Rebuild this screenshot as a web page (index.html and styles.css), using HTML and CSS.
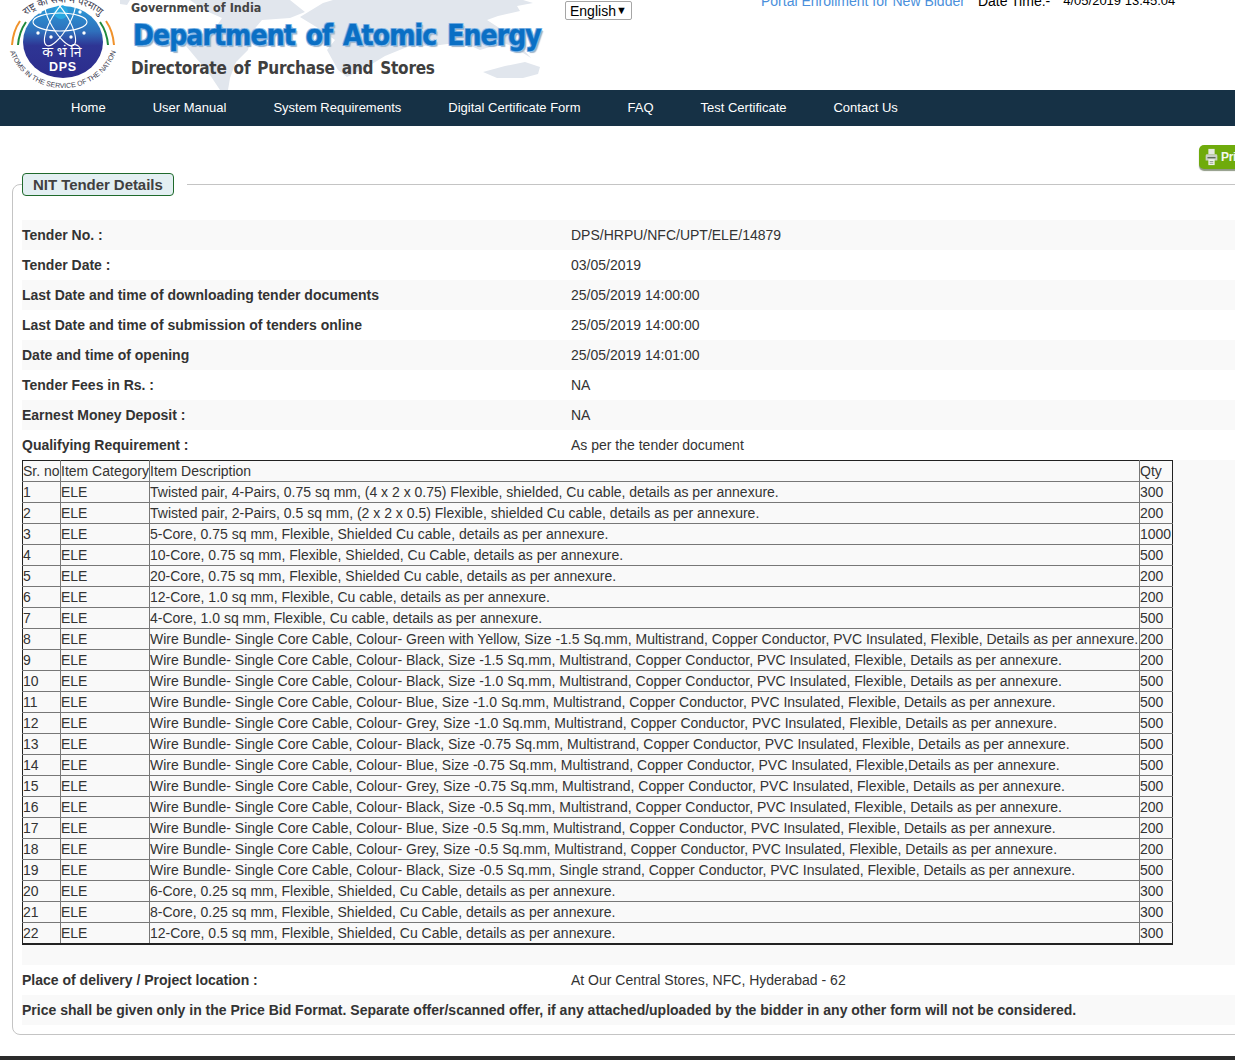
FILE: index.html
```html
<!DOCTYPE html>
<html lang="en">
<head>
<meta charset="utf-8">
<title>NIT Tender Details</title>
<link rel="stylesheet" href="styles.css">
</head>
<body>
<header class="top">
  <svg class="map" viewBox="0 0 560 90" aria-hidden="true">
    <path d="M120 0h10l-3 5-7-1z"/>
    <path d="M190 0H290L305 12 290 18 262 20 252 32 248 50 236 62 230 78 228 90H220L208 72 196 58 186 46 196 36 214 30 222 18 204 10Z"/>
    <path d="M333 0H523L533 3 517 6 520 11 498 16 487 20 507 33 520 46 531 58 512 46 503 43 480 50 462 42 440 45 407 47 385 56 367 67 347 77 338 70 327 50 335 40 318 28 300 17 323 3Z"/>
    <path d="M483 72L505 66 525 62 540 67 538 74 523 78 497 78Z"/>
  </svg>
  <svg class="logo" viewBox="0 0 130 90" role="img" aria-label="DPS logo">
    <defs>
      <linearGradient id="disc" x1="0" y1="0" x2="0" y2="1">
        <stop offset="0" stop-color="#2a9ad8"/>
        <stop offset=".35" stop-color="#2f70bc"/>
        <stop offset=".55" stop-color="#2e3594"/>
        <stop offset="1" stop-color="#2c2c8c"/>
      </linearGradient>
      <path id="ringBottom" d="M8 38A55 50 0 0 0 118 38"/>
      <path id="ringTop" d="M19 24A48 36 0 0 1 107 24"/>
    </defs>
    <ellipse cx="63" cy="42" rx="40" ry="36" fill="url(#disc)"/>
    <circle cx="61" cy="12" r="7" fill="#29a8e0"/>
    <g fill="none" stroke="#fff" stroke-width="1.100">
      <ellipse cx="60" cy="22" rx="27" ry="9"/>
      <ellipse cx="60" cy="22" rx="27" ry="9" transform="rotate(60 60 22)"/>
      <ellipse cx="60" cy="22" rx="27" ry="9" transform="rotate(120 60 22)"/>
    </g>
    <g fill="#fff">
      <circle cx="38" cy="33" r="1.700"/><circle cx="84" cy="33" r="1.700"/>
      <circle cx="51" cy="37" r="1.700"/><circle cx="71" cy="37" r="1.700"/>
      <circle cx="40" cy="12" r="1.700"/><circle cx="80" cy="12" r="1.700"/>
    </g>
    <text class="logo-hi" x="62" y="57" text-anchor="middle">क भं नि</text>
    <text class="logo-dps" x="63" y="71" text-anchor="middle">DPS</text>
    <path d="M20 21q-7 10-8 24" fill="none" stroke="#f0922b" stroke-width="2"/>
    <path d="M23 22q-7 10-8 23" fill="none" stroke="#fff" stroke-width="1"/>
    <path d="M26 22q-7 10-8 23" fill="none" stroke="#1e8a3c" stroke-width="2"/>
    <path d="M106 21q7 10 8 24" fill="none" stroke="#f0922b" stroke-width="2"/>
    <path d="M103 22q7 10 8 23" fill="none" stroke="#fff" stroke-width="1"/>
    <path d="M100 22q7 10 8 23" fill="none" stroke="#1e8a3c" stroke-width="2"/>
    <text class="logo-ring"><textPath href="#ringBottom" startOffset="50%" text-anchor="middle">ATOMS IN THE SERVICE OF THE NATION</textPath></text>
    <text class="logo-ring-hi"><textPath href="#ringTop" startOffset="50%" text-anchor="middle">राष्ट्र की सेवा में परमाणु</textPath></text>
  </svg>
  <div class="titles">
    <div class="gov">Government of India</div>
    <div class="dae">Department of Atomic Energy</div>
    <div class="dir">Directorate of Purchase and Stores</div>
  </div>
  <div class="lang"><span>English</span></div>
  <div class="meta">
    <a class="enrol" href="#">Portal Enrollment for New Bidder</a>
    <span>Date Time:-</span>
    <span class="stamp">4/05/2019 13:45:04</span>
  </div>
</header>
<nav class="nav">
  <a href="#">Home</a>
  <a href="#">User Manual</a>
  <a href="#">System Requirements</a>
  <a href="#">Digital Certificate Form</a>
  <a href="#">FAQ</a>
  <a href="#">Test Certificate</a>
  <a href="#">Contact Us</a>
</nav>
<main class="main">
  <div class="tools">
    <a class="print" href="#">
      <svg class="print-icon" viewBox="0 0 14 20" aria-hidden="true">
        <path fill="#e4e8e0" d="M3.500 1h7v6h-7z"/>
        <path fill="#c9cfc6" d="M2 7h10a1.500 1.500 0 0 1 1.500 1.500V14H.5V8.500A1.500 1.500 0 0 1 2 7z"/>
        <path fill="#5d6a5a" d="M2.500 10h9v1.500h-9z"/>
        <path fill="#eef1ea" d="M3.500 12.500h7V19h-7z"/>
        <path fill="#9aa596" d="M5 14.500h4v1H5zM5 16.500h4v1H5z"/>
      </svg>
      <span>Print</span>
    </a>
  </div>
  <fieldset class="panel">
    <legend class="panel-legend"><span>NIT Tender Details</span></legend>
    <div class="row"><b>Tender No. :</b><span>DPS/HRPU/NFC/UPT/ELE/14879</span></div>
    <div class="row"><b>Tender Date :</b><span>03/05/2019</span></div>
    <div class="row"><b>Last Date and time of downloading tender documents</b><span>25/05/2019 14:00:00</span></div>
    <div class="row"><b>Last Date and time of submission of tenders online</b><span>25/05/2019 14:00:00</span></div>
    <div class="row"><b>Date and time of opening</b><span>25/05/2019 14:01:00</span></div>
    <div class="row"><b>Tender Fees in Rs. :</b><span>NA</span></div>
    <div class="row"><b>Earnest Money Deposit :</b><span>NA</span></div>
    <div class="row"><b>Qualifying Requirement :</b><span>As per the tender document</span></div>
    <div class="table-band">
      <table class="items">
        <colgroup><col class="c1"><col class="c2"><col class="c3"><col class="c4"></colgroup>
        <tr><td>Sr. no</td><td>Item Category</td><td>Item Description</td><td>Qty</td></tr>
        <tr><td>1</td><td>ELE</td><td>Twisted pair, 4-Pairs, 0.75 sq mm, (4 x 2 x 0.75) Flexible, shielded, Cu cable, details as per annexure.</td><td>300</td></tr>
        <tr><td>2</td><td>ELE</td><td>Twisted pair, 2-Pairs, 0.5 sq mm, (2 x 2 x 0.5) Flexible, shielded Cu cable, details as per annexure.</td><td>200</td></tr>
        <tr><td>3</td><td>ELE</td><td>5-Core, 0.75 sq mm, Flexible, Shielded Cu cable, details as per annexure.</td><td>1000</td></tr>
        <tr><td>4</td><td>ELE</td><td>10-Core, 0.75 sq mm, Flexible, Shielded, Cu Cable, details as per annexure.</td><td>500</td></tr>
        <tr><td>5</td><td>ELE</td><td>20-Core, 0.75 sq mm, Flexible, Shielded Cu cable, details as per annexure.</td><td>200</td></tr>
        <tr><td>6</td><td>ELE</td><td>12-Core, 1.0 sq mm, Flexible, Cu cable, details as per annexure.</td><td>200</td></tr>
        <tr><td>7</td><td>ELE</td><td>4-Core, 1.0 sq mm, Flexible, Cu cable, details as per annexure.</td><td>500</td></tr>
        <tr><td>8</td><td>ELE</td><td>Wire Bundle- Single Core Cable, Colour- Green with Yellow, Size -1.5 Sq.mm, Multistrand, Copper Conductor, PVC Insulated, Flexible, Details as per annexure.</td><td>200</td></tr>
        <tr><td>9</td><td>ELE</td><td>Wire Bundle- Single Core Cable, Colour- Black, Size -1.5 Sq.mm, Multistrand, Copper Conductor, PVC Insulated, Flexible, Details as per annexure.</td><td>200</td></tr>
        <tr><td>10</td><td>ELE</td><td>Wire Bundle- Single Core Cable, Colour- Black, Size -1.0 Sq.mm, Multistrand, Copper Conductor, PVC Insulated, Flexible, Details as per annexure.</td><td>500</td></tr>
        <tr><td>11</td><td>ELE</td><td>Wire Bundle- Single Core Cable, Colour- Blue, Size -1.0 Sq.mm, Multistrand, Copper Conductor, PVC Insulated, Flexible, Details as per annexure.</td><td>500</td></tr>
        <tr><td>12</td><td>ELE</td><td>Wire Bundle- Single Core Cable, Colour- Grey, Size -1.0 Sq.mm, Multistrand, Copper Conductor, PVC Insulated, Flexible, Details as per annexure.</td><td>500</td></tr>
        <tr><td>13</td><td>ELE</td><td>Wire Bundle- Single Core Cable, Colour- Black, Size -0.75 Sq.mm, Multistrand, Copper Conductor, PVC Insulated, Flexible, Details as per annexure.</td><td>500</td></tr>
        <tr><td>14</td><td>ELE</td><td>Wire Bundle- Single Core Cable, Colour- Blue, Size -0.75 Sq.mm, Multistrand, Copper Conductor, PVC Insulated, Flexible,Details as per annexure.</td><td>500</td></tr>
        <tr><td>15</td><td>ELE</td><td>Wire Bundle- Single Core Cable, Colour- Grey, Size -0.75 Sq.mm, Multistrand, Copper Conductor, PVC Insulated, Flexible, Details as per annexure.</td><td>500</td></tr>
        <tr><td>16</td><td>ELE</td><td>Wire Bundle- Single Core Cable, Colour- Black, Size -0.5 Sq.mm, Multistrand, Copper Conductor, PVC Insulated, Flexible, Details as per annexure.</td><td>200</td></tr>
        <tr><td>17</td><td>ELE</td><td>Wire Bundle- Single Core Cable, Colour- Blue, Size -0.5 Sq.mm, Multistrand, Copper Conductor, PVC Insulated, Flexible, Details as per annexure.</td><td>200</td></tr>
        <tr><td>18</td><td>ELE</td><td>Wire Bundle- Single Core Cable, Colour- Grey, Size -0.5 Sq.mm, Multistrand, Copper Conductor, PVC Insulated, Flexible, Details as per annexure.</td><td>200</td></tr>
        <tr><td>19</td><td>ELE</td><td>Wire Bundle- Single Core Cable, Colour- Black, Size -0.5 Sq.mm, Single strand, Copper Conductor, PVC Insulated, Flexible, Details as per annexure.</td><td>500</td></tr>
        <tr><td>20</td><td>ELE</td><td>6-Core, 0.25 sq mm, Flexible, Shielded, Cu Cable, details as per annexure.</td><td>300</td></tr>
        <tr><td>21</td><td>ELE</td><td>8-Core, 0.25 sq mm, Flexible, Shielded, Cu Cable, details as per annexure.</td><td>300</td></tr>
        <tr><td>22</td><td>ELE</td><td>12-Core, 0.5 sq mm, Flexible, Shielded, Cu Cable, details as per annexure.</td><td>300</td></tr>
      </table>
    </div>
    <div class="row row-plain"><b>Place of delivery / Project location :</b><span>At Our Central Stores, NFC, Hyderabad - 62</span></div>
    <div class="row row-wide"><b>Price shall be given only in the Price Bid Format. Separate offer/scanned offer, if any attached/uploaded by the bidder in any other form will not be considered.</b></div>
  </fieldset>
</main>
<footer class="foot"></footer>
</body>
</html>
```
FILE: styles.css
```css
html, body {
  margin: 0;
  padding: 0;
  height: 1060px;
  overflow: hidden;
  background: #fff;
  font-family: "Liberation Sans", Arial, sans-serif;
  font-size: 14px;
  color: #333;
}

.top {
  position: relative;
  display: flex;
  align-items: flex-start;
  height: 90px;
  overflow: hidden;
}
.map {
  position: absolute;
  left: 0;
  top: 0;
  width: 560px;
  height: 90px;
  fill: #e1e6ed;
}
.logo {
  position: relative;
  flex: none;
  width: 130px;
  height: 90px;
}
.logo-hi {
  font: 400 14px "Noto Sans Devanagari", "Noto Sans", sans-serif;
  fill: #fff;
}
.logo-dps {
  font: 700 12.500px "Liberation Sans", sans-serif;
  letter-spacing: .7px;
  fill: #fff;
}
.logo-ring {
  font: 7px "Liberation Sans", sans-serif;
  fill: #3c3c50;
}
.logo-ring-hi {
  font: 10px "Noto Sans Devanagari", "Noto Sans", sans-serif;
  fill: #3c3c50;
}

.titles {
  position: relative;
  flex: none;
  width: 435px;
}
.gov {
  padding-left: 1px;
  font: 700 12.500px/15px "DejaVu Sans Condensed", "DejaVu Sans", sans-serif;
  color: #444;
}
.dae {
  margin-top: 4px;
  padding-left: 3px;
  font: 700 28px/34px "DejaVu Sans Condensed", "DejaVu Sans", sans-serif;
  letter-spacing: -.9px;
  word-spacing: 3px;
  white-space: nowrap;
  color: #0a6fc4;
  -webkit-text-stroke: .4px #0a6fc4;
  text-shadow: 1px 1px 0 #8dbdea, -1px -1px 0 #8dbdea, 1px -1px 0 #8dbdea, -1px 1px 0 #8dbdea, 2px 2px 1px #9fb3c8;
}
.dir {
  margin-top: 5px;
  padding-left: 1px;
  font: 700 17px/20px "DejaVu Sans Condensed", "DejaVu Sans", sans-serif;
  letter-spacing: -.25px;
  word-spacing: 2px;
  white-space: nowrap;
  color: #3f3f3f;
}

.lang {
  position: relative;
  flex: none;
  box-sizing: border-box;
  width: 67px;
  height: 19px;
  margin-top: 1px;
  padding-left: 4px;
  border: 1px solid #a6a6a6;
  border-radius: 2px;
  background: #fff;
  color: #000;
  line-height: 18px;
}
.lang::after {
  content: "\25BC";
  position: absolute;
  right: 4px;
  top: -1px;
  font-size: 11px;
}

.meta {
  flex: none;
  display: flex;
  gap: 13px;
  margin: -7px 0 0 129px;
  line-height: 16px;
  white-space: nowrap;
  color: #000;
}
.enrol {
  color: #4a8fdb;
  text-decoration: none;
}
.stamp {
  font-size: 13px;
}

.nav {
  display: flex;
  gap: 47px;
  height: 36px;
  padding-left: 71px;
  background: #163145;
  font-size: 13px;
  line-height: 35px;
}
.nav a {
  color: #fff;
  text-decoration: none;
}

.main {
  overflow: hidden;
}
.tools {
  display: flex;
  justify-content: flex-start;
  height: 25px;
  padding: 19px 0 0 1199px;
}
.print {
  flex: none;
  display: flex;
  align-items: center;
  gap: 3px;
  box-sizing: border-box;
  width: 70px;
  height: 24px;
  padding-left: 6px;
  border-radius: 5px;
  background: #6fab0c;
  box-shadow: 0 2px 1px #8f9a86;
  font: 700 12px "Liberation Sans", sans-serif;
  letter-spacing: -.3px;
  color: #f4f8ec;
  text-decoration: none;
}
.print-icon {
  flex: none;
  width: 13px;
  height: 18px;
}

.panel {
  box-sizing: border-box;
  width: 1300px;
  height: 862px;
  margin: 3px 0 0 12px;
  padding: 0 0 0 9px;
  border: 1px solid #c4c4c4;
  border-radius: 8px;
}
.panel-legend {
  padding: 0 13px 0 0;
  margin-bottom: 24px;
  line-height: 0;
}
.panel-legend span {
  display: block;
  box-sizing: border-box;
  width: 152px;
  height: 23px;
  padding: 0 0 0 10px;
  border: 1px solid #1f6a2c;
  border-radius: 4px;
  background: #e3eff2;
  font-size: 15px;
  font-weight: 700;
  letter-spacing: -.05px;
  line-height: 22px;
  white-space: nowrap;
  color: #404040;
}

.row {
  display: grid;
  grid-template-columns: 549px 1fr;
  height: 30px;
  line-height: 30px;
}
.row:nth-of-type(odd) {
  background: #f9f9f9;
}
.row b {
  white-space: nowrap;
}
.row-plain {
  background: #fff !important;
}
.row-wide {
  background: #f9f9f9 !important;
}

.table-band {
  height: 505px;
  background: #f9f9f9;
}
.items {
  table-layout: fixed;
  width: 1150px;
  border-collapse: collapse;
  border: 1px solid #222;
  border-bottom-width: 2px;
  line-height: 20px;
}
.items td {
  padding: 0;
  border: 1px solid #777;
  white-space: nowrap;
}
.items tr:first-child td {
  border-top-color: #222;
}
.items tr:last-child td {
  border-bottom-color: #222;
}
.items td:first-child {
  border-left-color: #222;
}
.items td:last-child {
  border-right-color: #222;
}
.c1 { width: 38px; }
.c2 { width: 89px; }
.c3 { width: 990px; }
.c4 { width: 33px; }

.foot {
  height: 4px;
  margin-top: 21px;
  background: #2b2b2b;
}
```
